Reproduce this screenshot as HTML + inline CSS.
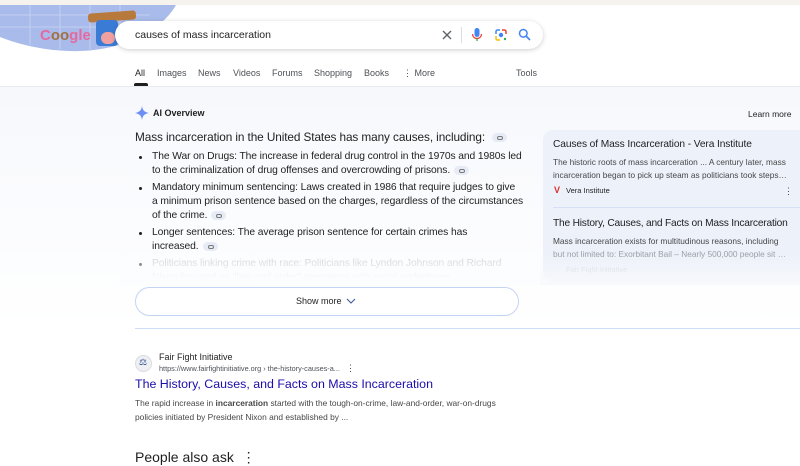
<!DOCTYPE html>
<html><head><meta charset="utf-8"><style>
*{margin:0;padding:0;box-sizing:border-box}
body{width:800px;height:456px;overflow:hidden;background:#fff;font-family:"Liberation Sans",Arial,sans-serif;color:#1f1f1f;position:relative}
.a{position:absolute;white-space:nowrap}
.tab{position:absolute;top:68px;font-size:9px;color:#4d5156}
.ln{font-size:10.3px;line-height:14px;color:#1f1f1f;letter-spacing:-0.1px}
.chip{display:inline-block;width:15px;height:9px;border-radius:5px;background:#e6ebf5;vertical-align:middle;margin-left:4px;position:relative}
.chip:after{content:"";position:absolute;left:5px;top:3px;width:4px;height:2px;border:1px solid #777;border-radius:2px}
li{list-style:none;position:relative;padding-left:17px;margin-bottom:3px}
li:before{content:"";position:absolute;left:4px;top:6px;width:3px;height:3px;border-radius:50%;background:#1f1f1f}
</style></head><body>
<div class="a" style="left:0;top:0;width:800px;height:5px;background:#f6f3ee"></div>
<svg class="a" style="left:0;top:5px" width="180" height="50"><path d="M0 0H176 C160 28 120 45 80 46 C50 47 20 40 0 32Z" fill="#a9bbea"/><path d="M0 10H150M0 22H120M30 0V40M60 0V44M90 0V46M120 0V40" stroke="#c2cff2" stroke-width="1"/></svg>
<div class="a" style="left:40px;top:27px;font-size:15px;font-weight:bold;color:#e46aa0">C<span style="color:#a07040">oo</span>gle</div>
<div class="a" style="left:88px;top:12px;width:48px;height:9px;background:#b87a3c;border-radius:3px;transform:rotate(-4deg)"></div>
<div class="a" style="left:96px;top:20px;width:22px;height:26px;background:#3a7bd5;border-radius:4px"></div>
<div class="a" style="left:101px;top:32px;width:14px;height:12px;background:#f0a0a0;border-radius:6px"></div>
<div class="a" style="left:115px;top:21px;width:428px;height:28px;border-radius:14px;background:#fff;box-shadow:0 1px 5px rgba(32,33,36,.22)"></div>
<div class="a" style="left:135px;top:29px;font-size:10.5px;color:#1f1f1f">causes of mass incarceration</div>
<svg class="a" style="left:441px;top:29px" width="12" height="12"><path d="M2 2L10 10M10 2L2 10" stroke="#5f6368" stroke-width="1.4"/></svg>
<div class="a" style="left:461px;top:27px;width:1px;height:16px;background:#dadce0"></div>
<svg class="a" style="left:471px;top:27px" width="12" height="16"><rect x="3.5" y="1" width="5" height="9" rx="2.5" fill="#4285f4"/><path d="M1.5 7a4.5 4.5 0 009 0" stroke="#ea4335" stroke-width="1.3" fill="none"/><path d="M6 11.5V14" stroke="#34a853" stroke-width="1.3"/></svg>
<svg class="a" style="left:494px;top:28px" width="14" height="14"><path d="M2 6V3.5A1.5 1.5 0 013.5 2H6" stroke="#4285f4" stroke-width="1.5" fill="none"/><path d="M8 2h2.5A1.5 1.5 0 0112 3.5V6" stroke="#ea4335" stroke-width="1.5" fill="none"/><path d="M2 8v2.5A1.5 1.5 0 003.5 12H6" stroke="#fbbc04" stroke-width="1.5" fill="none"/><circle cx="7" cy="7" r="2.2" fill="#4285f4"/><circle cx="11" cy="11" r="1.2" fill="#34a853"/></svg>
<svg class="a" style="left:518px;top:28px" width="13" height="13"><circle cx="5.3" cy="5.3" r="3.8" stroke="#4285f4" stroke-width="1.5" fill="none"/><path d="M8 8l4 4" stroke="#4285f4" stroke-width="1.6"/></svg>
<div class="tab" style="left:135px;color:#1f1f1f">All</div>
<div class="a" style="left:134px;top:83px;width:14px;height:3px;background:#1f1f1f;border-radius:2px 2px 0 0"></div>
<div class="tab" style="left:157px">Images</div>
<div class="tab" style="left:198px">News</div>
<div class="tab" style="left:233px">Videos</div>
<div class="tab" style="left:272px">Forums</div>
<div class="tab" style="left:314px">Shopping</div>
<div class="tab" style="left:364px">Books</div>
<div class="tab" style="left:403px">⋮ More</div>
<div class="tab" style="left:516px">Tools</div>
<div class="a" style="left:0;top:86px;width:800px;height:242px;background:linear-gradient(#f7f8fc,#fbfcfe 60%,#fff);border-top:1px solid #e8eaed"></div>
<svg class="a" style="left:135px;top:106px" width="14" height="14"><path d="M7 0C7.6 4 9 6 14 7 9 8 7.6 10 7 14 6.4 10 5 8 0 7 5 6 6.4 4 7 0Z" fill="#6d8ef5"/></svg>
<div class="a" style="left:153px;top:108px;font-size:9px;font-weight:bold;color:#1f1f1f">AI Overview</div>
<div class="a" style="left:748px;top:109px;font-size:8.5px;color:#1f1f1f">Learn more</div>
<div class="a ln" style="left:135px;top:130px;font-size:11.8px;line-height:15px">Mass incarceration in the United States has many causes, including: <span class="chip"></span></div>
<ul class="a" style="left:135px;top:150px;width:388px;white-space:normal">
<li class="ln">The War on Drugs: The increase in federal drug control in the 1970s and 1980s led to the criminalization of drug offenses and overcrowding of prisons.<span class="chip"></span></li>
<li class="ln">Mandatory minimum sentencing: Laws created in 1986 that require judges to give a minimum prison sentence based on the charges, regardless of the circumstances of the crime.<span class="chip"></span></li>
<li class="ln">Longer sentences: The average prison sentence for certain crimes has<br>increased.<span class="chip"></span></li>
<li class="ln" style="color:#c4c7cc">Politicians linking crime with race: Politicians like Lyndon Johnson and Richard Nixon focused on "law and order" messages with racial undertones.</li>
</ul>
<div class="a" style="left:120px;top:250px;width:420px;height:36px;background:linear-gradient(rgba(251,252,254,0),#fcfdfe 80%)"></div>
<div class="a" style="left:543px;top:130px;width:270px;height:152px;border-radius:10px;background:#edf1fa"></div>
<div class="a" style="left:553px;top:139px;font-size:10.2px;color:#1f1f1f;letter-spacing:-0.1px">Causes of Mass Incarceration - Vera Institute</div>
<div class="a" style="left:553px;top:156px;font-size:8.3px;line-height:13px;color:#474747">The historic roots of mass incarceration ... A century later, mass<br>incarceration began to pick up steam as politicians took steps…</div>
<div class="a" style="left:554px;top:185px;font-size:9px;font-weight:bold;color:#d93025">V</div>
<div class="a" style="left:566px;top:186px;font-size:7.5px;color:#1f1f1f">Vera Institute</div>
<div class="a" style="left:784px;top:186px;font-size:9px;color:#444">⋮</div>
<div class="a" style="left:553px;top:207px;width:247px;height:1px;background:#d6e0f5"></div>
<div class="a" style="left:553px;top:218px;font-size:10.2px;color:#1f1f1f;letter-spacing:-0.2px">The History, Causes, and Facts on Mass Incarceration</div>
<div class="a" style="left:553px;top:235px;font-size:8.3px;line-height:13px;color:#474747">Mass incarceration exists for multitudinous reasons, including<br><span style="color:#9aa0a6">but not limited to: Exorbitant Bail – Nearly 500,000 people sit …</span></div>
<div class="a" style="left:566px;top:265px;font-size:7.5px;color:#d0d4da">Fair Fight Initiative</div>
<div class="a" style="left:540px;top:255px;width:260px;height:30px;background:linear-gradient(rgba(247,248,252,0),#f8f9fc)"></div>
<div class="a" style="left:135px;top:287px;width:384px;height:29px;border:1px solid #c4d4f5;border-radius:15px;background:#fff"></div>
<div class="a" style="left:296px;top:296px;font-size:9px;color:#1f1f1f">Show more</div>
<svg class="a" style="left:346px;top:297px" width="10" height="8"><path d="M1 2l4 4 4-4" stroke="#3c5a9a" stroke-width="1.1" fill="none"/></svg>
<div class="a" style="left:135px;top:328px;width:665px;height:1px;background:#cfdcf5"></div>
<div class="a" style="left:135px;top:355px;width:17px;height:17px;border-radius:50%;background:#eef0f4;border:1px solid #dadce0"></div>
<div class="a" style="left:139px;top:357px;font-size:9px;color:#2a4a8a">⚖</div>
<div class="a" style="left:159px;top:352px;font-size:9px;color:#1f1f1f">Fair Fight Initiative</div>
<div class="a" style="left:159px;top:364px;font-size:7.3px;color:#4d5156">https://www.fairfightinitiative.org › the-history-causes-a...</div>
<div class="a" style="left:346px;top:363px;font-size:9px;color:#444">⋮</div>
<div class="a" style="left:135px;top:377px;font-size:12.4px;color:#1a0dab">The History, Causes, and Facts on Mass Incarceration</div>
<div class="a" style="left:135px;top:396px;font-size:8.4px;line-height:14px;color:#474747">The rapid increase in <b>incarceration</b> started with the tough-on-crime, law-and-order, war-on-drugs<br>policies initiated by President Nixon and established by ...</div>
<div class="a" style="left:135px;top:449px;font-size:14px;color:#1f1f1f">People also ask &nbsp;⋮</div>
</body></html>
